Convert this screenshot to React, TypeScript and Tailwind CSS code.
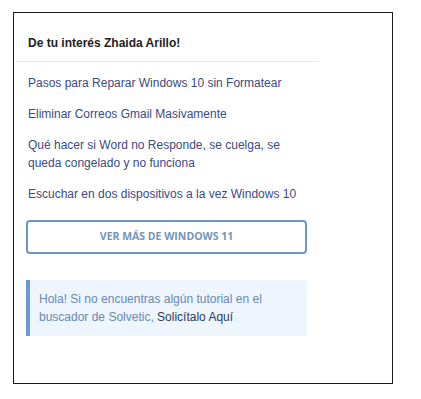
export default function App() {
  const links = [
    "Pasos para Reparar Windows 10 sin Formatear",
    "Eliminar Correos Gmail Masivamente",
    "Qué hacer si Word no Responde, se cuelga, se queda congelado y no funciona",
    "Escuchar en dos dispositivos a la vez Windows 10",
  ];

  return (
    <div className="h-[399px] w-[421px] bg-white pl-[13px] pt-[12px] font-['Liberation_Sans',Arial,sans-serif]">
      <div className="h-[372px] w-[380px] border border-[#1a1a1a]">
        <div className="ml-[2px] w-[303px] pt-[22px]">
          <h3 className="px-[12px] pb-[10px] text-[12px] font-bold leading-[16px] text-[#222]">
            De tu interés Zhaida Arillo!
          </h3>
          <div className="h-px bg-[#e6e6e6]" />
          <ul className="flex flex-col gap-[13px] px-[12px] pt-[12px]">
            {links.map((link) => (
              <li key={link}>
                <a className="block text-[12px] leading-[18px] text-[#3b4a80]">{link}</a>
              </li>
            ))}
          </ul>
          <div className="mt-[17px] pl-[10px] pr-[12px]">
            <button
              type="button"
              className="flex h-[34px] w-full items-center justify-center rounded-[4px] border-2 border-[#6f96bf] font-['Open_Sans',sans-serif] text-[10.5px] font-bold text-[#7294bb]"
            >
              VER MÁS DE WINDOWS 11
            </button>
          </div>
          <div className="mt-[26px] ml-[10px] mr-[12px] border-l-4 border-[#6a9ad0] bg-[#eef5fc] py-[10px] pl-[9px] pr-[8px]">
            <p className="text-[12px] leading-[18px] text-[#6a88b8]">
              Hola! Si no encuentras algún tutorial en el buscador de Solvetic,{" "}
              <a className="text-[#2c3a5e]">Solicítalo Aquí</a>
            </p>
          </div>
        </div>
      </div>
    </div>
  );
}
